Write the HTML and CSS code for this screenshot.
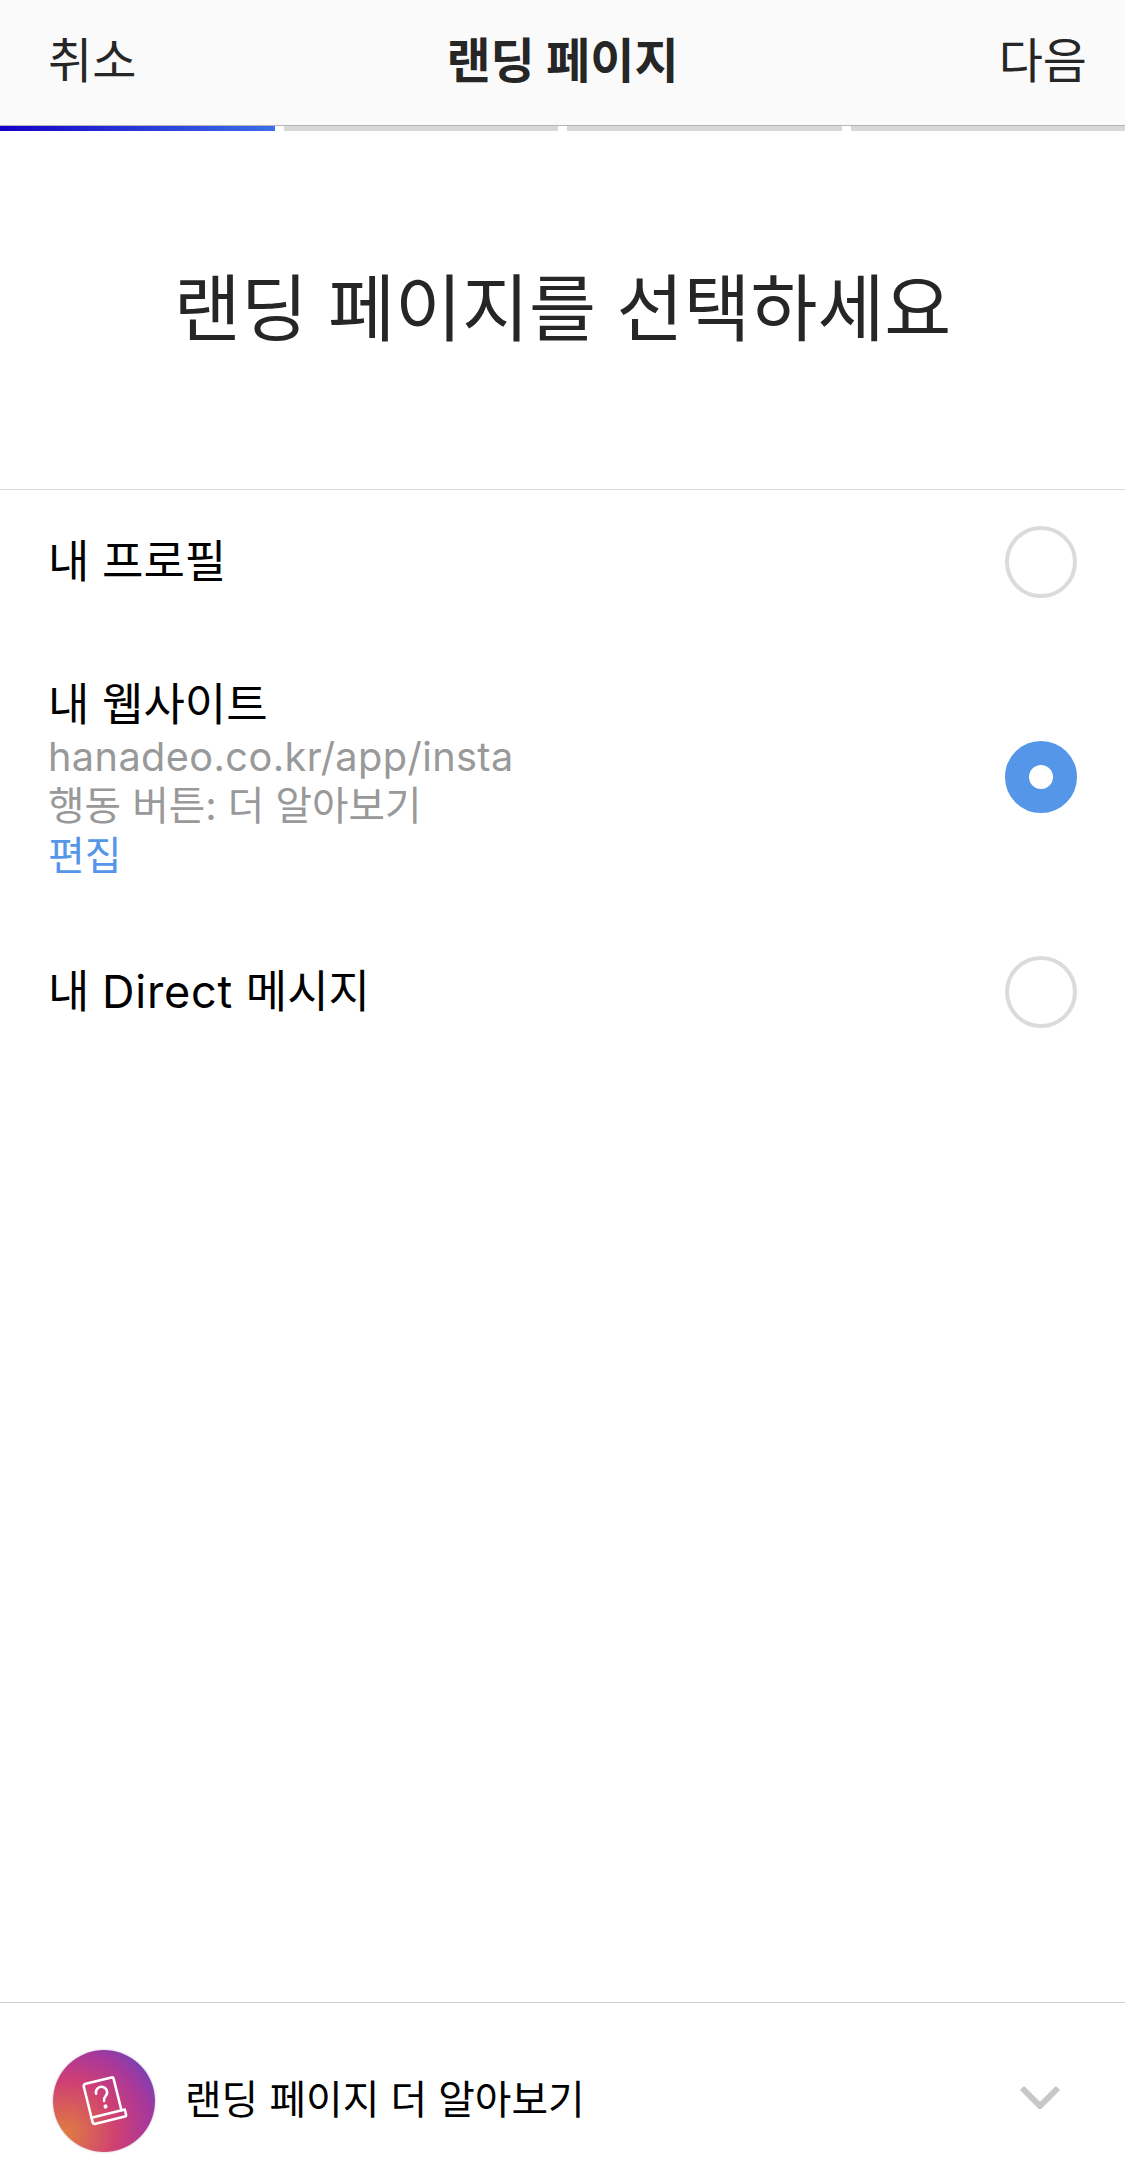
FILE: index.html
```html
<!DOCTYPE html>
<html lang="ko">
<head>
    <meta charset="UTF-8" />
    <meta name="viewport" content="width=device-width, initial-scale=1.0" />
    <title>랜딩 페이지</title>
    <link rel="stylesheet" href="styles.css">
</head>
<body>
    <div class="container">
        <div class="topbar">
            <span class="topbar-link">취소</span>
            <span class="topbar-title">랜딩 페이지</span>
            <span class="topbar-link">다음</span>
        </div>
        <div class="progress">
            <div class="step step-active"></div>
            <div class="step"></div>
            <div class="step"></div>
            <div class="step"></div>
        </div>

        <h1 class="heading">랜딩 페이지를 선택하세요</h1>

        <div class="options">
            <div class="option option-single">
                <div class="option-text">
                    <div class="option-name">내 프로필</div>
                </div>
                <div class="radio"></div>
            </div>
            <div class="option option-multi">
                <div class="option-text option-text-multi">
                    <div class="option-name">내 웹사이트</div>
                    <div class="option-sub option-url">hanadeo.co.kr/app/insta</div>
                    <div class="option-sub">행동 버튼: 더 알아보기</div>
                    <div class="option-edit">편집</div>
                </div>
                <div class="radio radio-on"></div>
            </div>
            <div class="option option-single">
                <div class="option-text">
                    <div class="option-name">내 <span class="option-latin">Direct</span> 메시지</div>
                </div>
                <div class="radio"></div>
            </div>
        </div>

        <div class="footer">
            <div class="footer-icon">
                <svg width="48" height="55" viewBox="0 0 56 64" fill="none" stroke="#fff" stroke-width="3" stroke-linejoin="round" stroke-linecap="round">
                    <g transform="rotate(-14 28 32)">
                        <path d="M9 48V11a3 3 0 0 1 3-3h31a2 2 0 0 1 2 2v38"/>
                        <path d="M9 48h40v6a2 2 0 0 1-2 2H12a3 3 0 0 1-3-3z"/>
                        <path d="M21 22a6.500 6.500 0 1 1 10 5.500c-2 1.300-3 2.500-3 5"/>
                        <path d="M28 39v.5" stroke-width="4.500"/>
                    </g>
                </svg>
            </div>
            <div class="footer-label">랜딩 페이지 더 알아보기</div>
            <svg class="chevron" width="42" height="26" viewBox="0 0 42 26" fill="none" stroke="#c7c7c7" stroke-width="6">
                <path d="M3 5l18 18L39 5"/>
            </svg>
        </div>
    </div>
</body>
</html>
```

FILE: styles.css
```css
* {
    box-sizing: border-box;
}

body {
    margin: 0;
    background: #fff;
    font-family: 'Inter', 'Noto Sans CJK KR', sans-serif;
}

.container {
    width: 1125px;
    height: 2180px;
    display: flex;
    flex-direction: column;
}

.topbar {
    height: 126px;
    padding: 0 38px 11px 48px;
    background: #fafafa;
    border-bottom: 1px solid #b5b5b5;
    display: flex;
    justify-content: space-between;
    align-items: center;
    flex-shrink: 0;
}

.topbar-link {
    width: 90px;
    font-size: 48px;
    color: #262626;
    white-space: nowrap;
}

.topbar-link:last-child {
    width: 100px;
    text-align: right;
}

.topbar-title {
    font-size: 48px;
    font-weight: bold;
    color: #262626;
}

.progress {
    height: 5px;
    display: flex;
    gap: 9px;
    flex-shrink: 0;
}

.step {
    flex: 1;
    background: #d8d8d8;
}

.step-active {
    background: linear-gradient(90deg, #1400c8, #3b6fe8);
}

.heading {
    margin: 0;
    height: 359px;
    padding-bottom: 14px;
    display: flex;
    justify-content: center;
    align-items: center;
    font-size: 72.800px;
    font-weight: normal;
    color: #262626;
    border-bottom: 1px solid #dbdbdb;
    flex-shrink: 0;
}

.options {
    flex: 1;
}

.option {
    display: flex;
    justify-content: space-between;
    align-items: center;
    padding: 0 48px;
}

.option-single {
    height: 144px;
}

.option-multi {
    height: 286px;
}

.option-text-multi {
    padding-top: 3px;
}

.option-name {
    font-size: 45px;
    line-height: 56px;
    color: #000;
}

.option-latin {
    letter-spacing: 0.800px;
}

.option-sub {
    font-size: 39.700px;
    line-height: 49px;
    color: #999;
}

.option-url {
    letter-spacing: 0.400px;
}

.option-edit {
    font-size: 40px;
    line-height: 49px;
    color: #5596e9;
}

.radio {
    width: 72px;
    height: 72px;
    border: 4px solid #dbdbdb;
    border-radius: 50%;
}

.radio-on {
    border: 24px solid #5596e9;
}

.footer {
    height: 178px;
    padding: 9px 64px 0 53px;
    border-top: 1px solid #cfcfcf;
    display: flex;
    align-items: center;
    flex-shrink: 0;
}

.footer-icon {
    width: 102px;
    height: 102px;
    margin-top: 9px;
    border-radius: 50%;
    background: radial-gradient(circle 110px at 12% 82%, #e07d40 0, #cf3f74 48%, #a6389c 78%, #6a44b8 100%);
    box-shadow: 0 0 2px rgba(120, 70, 150, 0.5);
    display: flex;
    justify-content: center;
    align-items: center;
    flex-shrink: 0;
}

.footer-label {
    flex: 1;
    margin-left: 30px;
    font-size: 39.800px;
    color: #000;
}
```
